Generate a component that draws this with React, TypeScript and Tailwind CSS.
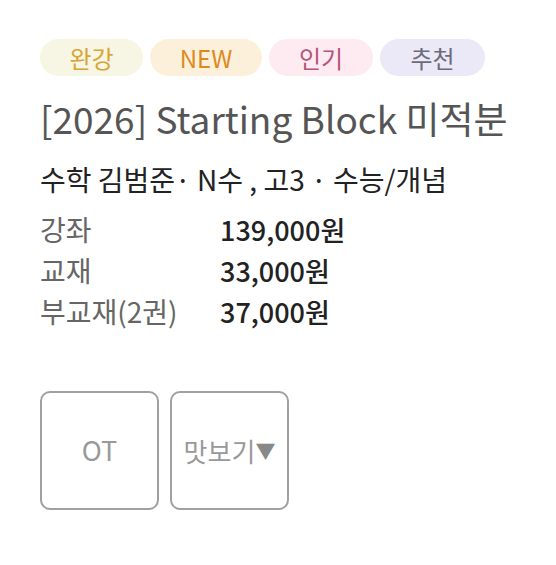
import React from "react";

const font = { fontFamily: '"Noto Sans CJK KR", "Noto Sans", sans-serif' };

export default function App() {
  return (
    <div className="w-[556px] h-[565px] bg-white" style={font}>
      <div className="pl-[40px] pt-[39px] flex flex-col">
        <div className="flex gap-[7px]">
          <span className="h-[37px] w-[103px] rounded-full bg-[#f7f5e3] text-[#d8a636] text-[24px] leading-none flex items-center justify-center">완강</span>
          <span className="h-[37px] w-[112px] rounded-full bg-[#fdf0da] text-[#dc8a1f] text-[24px] leading-none flex items-center justify-center">NEW</span>
          <span className="h-[37px] w-[104px] rounded-full bg-[#fdebf1] text-[#b4557a] text-[24px] leading-none flex items-center justify-center">인기</span>
          <span className="h-[37px] w-[105px] rounded-full bg-[#ebe8f8] text-[#6c6c78] text-[24px] leading-none flex items-center justify-center">추천</span>
        </div>
        <div className="mt-[18px] text-[37px] leading-[48px] text-[#555555] whitespace-nowrap">[2026] Starting Block 미적분</div>
        <div className="mt-[19px] text-[28px] leading-[36px] text-[#222222] whitespace-nowrap">수학 김범준· N수 , 고3 · 수능/개념</div>
        <div className="mt-[12px] flex flex-col leading-[41px]">
          <div className="flex items-center">
            <span className="w-[180px] text-[28px] text-[#666666]">강좌</span>
            <span className="text-[27px] text-[#222222] font-medium">139,000원</span>
          </div>
          <div className="flex items-center">
            <span className="w-[180px] text-[28px] text-[#666666]">교재</span>
            <span className="text-[27px] text-[#222222] font-medium">33,000원</span>
          </div>
          <div className="flex items-center">
            <span className="w-[180px] text-[28px] text-[#666666]">부교재(2권)</span>
            <span className="text-[27px] text-[#222222] font-medium">37,000원</span>
          </div>
        </div>
        <div className="mt-[59px] flex gap-[11px]">
          <div className="w-[119px] h-[119px] border-2 border-[#a0a0a0] rounded-[10px] flex items-center justify-center text-[27px] text-[#999999]">OT</div>
          <div className="w-[119px] h-[119px] border-2 border-[#a0a0a0] rounded-[10px] flex items-center justify-center text-[26px] text-[#999999]">
            맛보기<span className="text-[20px] text-[#888888]">▼</span>
          </div>
        </div>
      </div>
    </div>
  );
}
